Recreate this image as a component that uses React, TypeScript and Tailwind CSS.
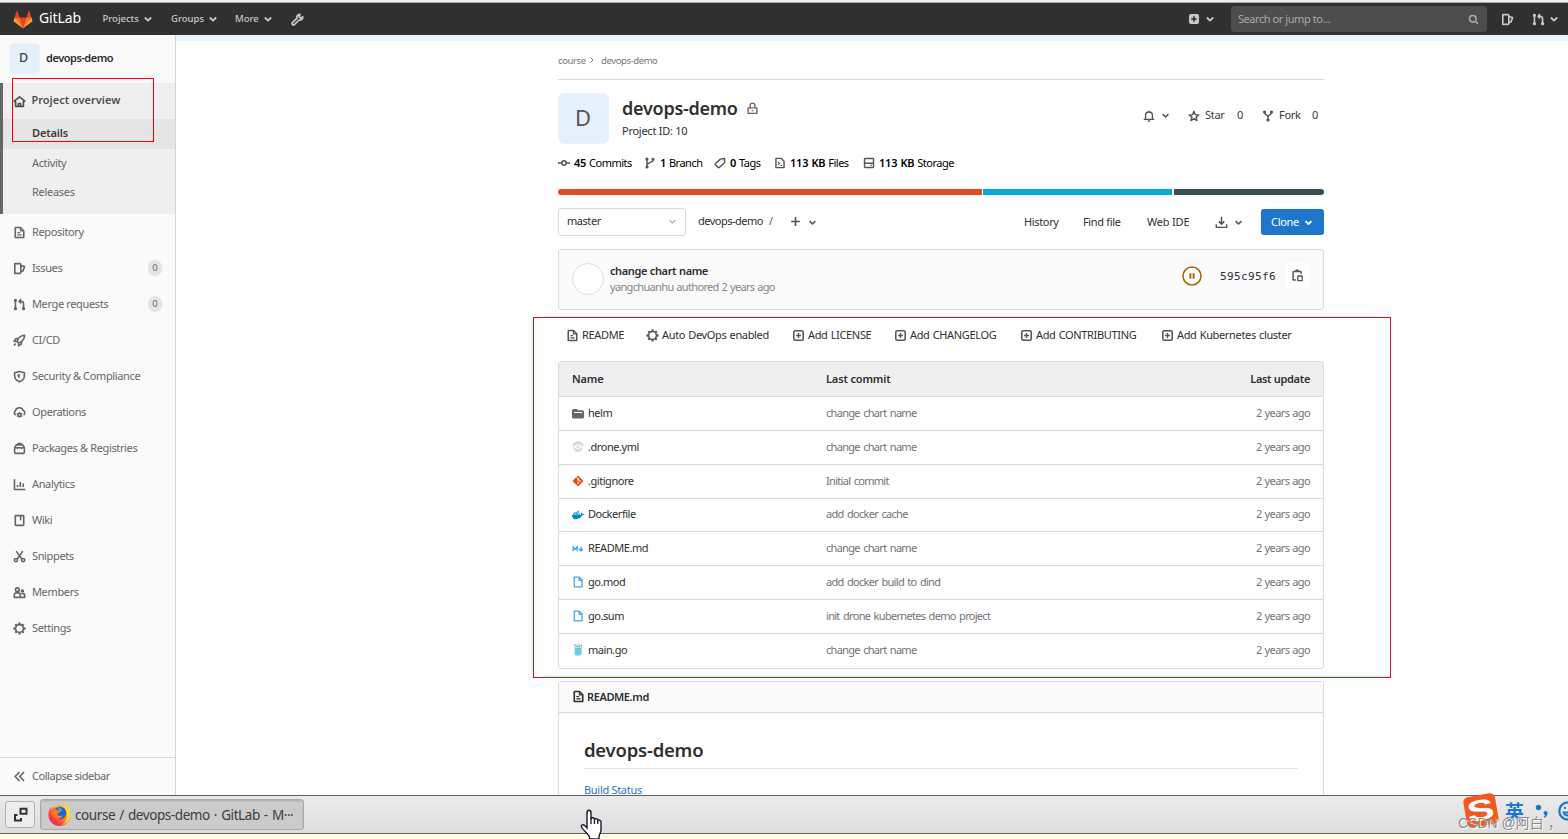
import React from 'react';
import clsx from 'clsx';
import { FaDocker, FaGitAlt } from 'react-icons/fa';

// 16x16 line icons, drawn with currentColor
const ICONS: { [key: string]: React.ReactNode } = {
  home: <path d="M.8 8.200 8 2.200l7.200 6M3.200 7.500V14h9.600V7.500M6.600 14v-3.600h2.800V14" />,
  doc: (
    <>
      <path d="M3.600 1.800h5.600L13.200 5.800v8.400H2.800V2.600a.8.800 0 0 1 .8-.8z" />
      <path d="M9 2.400V6h3.600M5.400 8.200h3.400M5.400 11h5.200" strokeWidth="1.400" />
    </>
  ),
  issues: <path d="M2.200 2h6.200a1.200 1.200 0 0 1 1.200 1.200v9.600A1.200 1.200 0 0 1 8.400 14H2.200zM9.800 4.400l4.400 1.300-1.800 5-2.600 1.500" />,
  merge: (
    <>
      <path d="M3 3v10M7.600 4h2.200c2 0 3.200 1.200 3.200 3.200V13M10 1.400 7.400 4 10 6.600" />
      <circle cx="3" cy="2.800" r="1" />
      <circle cx="3" cy="13.200" r="1" />
      <circle cx="13" cy="13.200" r="1" />
    </>
  ),
  rocket: <path d="M5 9.200C6.400 4.800 9.600 2 14.400 1.600 14 6.400 11.200 9.600 6.800 11zM5 9.200 1.400 8.800 3.800 5.600h3M6.800 11l.2 3.600 3.400-2.400V9.400M3.200 11.600l-2 2.600" />,
  shield: (
    <>
      <path d="M8 1.800 2 3.400v4c0 3.400 2.600 5.800 6 7.200 3.400-1.400 6-3.800 6-7.200v-4z" />
      <path d="M8.200 4.600v6C6.400 9.400 5.400 8.200 5.400 6.800V5.400z" fill="currentColor" stroke="none" />
    </>
  ),
  cloud: (
    <>
      <path d="M3.400 11A3 3 0 0 1 3 5.800 5 5 0 0 1 12.600 5.600 3 3 0 0 1 13 11" />
      <circle cx="8" cy="11" r="1.900" />
      <path d="M8 7.600v1.600M8 12.800v1.800M4.600 9.200l1.400.8M10 12l1.400.8M11.400 9.200 10 10M6 12l-1.400.8" strokeWidth="1.600" />
    </>
  ),
  package: (
    <>
      <path d="M2 7h12v5.600A1.400 1.400 0 0 1 12.600 14H3.400A1.400 1.400 0 0 1 2 12.600zM2 7l2-3.400h8L14 7" />
      <path d="M5.800 3.200V1.800h4.400v1.400M5.600 7v1.800M10.400 7v1.800" strokeWidth="1.500" />
    </>
  ),
  chart: <path d="M1.800 1.400v12.800h13.400M5.600 11.200V8.600M9 11.200V4.800M12.600 11.200V6.800" />,
  book: <path d="M3.600 2h8.800a.8.800 0 0 1 .8.800v10.400a.8.800 0 0 1-.8.800H3.600a.8.800 0 0 1-.8-.8V2.800a.8.800 0 0 1 .8-.8zM9.400 2v5.600" />,
  scissors: (
    <>
      <path d="m4 1.400 6.800 9.600M12 1.400 5.200 11" />
      <circle cx="3.600" cy="12.400" r="2" />
      <circle cx="12.400" cy="12.400" r="2" />
    </>
  ),
  members: (
    <>
      <circle cx="5.400" cy="4.600" r="2.300" />
      <path d="M1.600 14v-3a2.600 2.600 0 0 1 2.600-2.600h2.200A2.600 2.600 0 0 1 9 11v3zM9 14h5.400v-2.600A2 2 0 0 0 12.400 9.400H10.400" />
      <circle cx="11.600" cy="6.200" r="1.200" />
    </>
  ),
  gear: (
    <>
      <circle cx="8" cy="8" r="4.800" />
      <path d="M8 .6v2M8 13.400v2M.6 8h2M13.400 8h2M2.800 2.800l1.400 1.400M11.800 11.800l1.400 1.400M2.800 13.200l1.400-1.400M11.800 4.200l1.400-1.400" strokeWidth="2.800" />
    </>
  ),
  collapse: <path d="M8 2.600 2.600 8 8 13.400M13.600 2.600 8.200 8l5.400 5.400" />,
  lock: <path d="M2.600 7.200h10.800V14H2.600zM5 7V4.400a3 3 0 0 1 6 0V7M7 10.600h2" />,
  bell: <path d="M3.400 12V7.200a4.600 4.600 0 0 1 9.200 0V12M1 12.400h14M6.600 14.600h2.800M8 1v1.600" />,
  star: <path d="m8 1.800 1.800 4.400 4.600.3-3.600 3 1.200 4.700L8 11.600l-4 2.600 1.200-4.700-3.600-3 4.600-.3z" />,
  fork: (
    <>
      <path d="M3.400 3.600c0 3 4.600 2.600 4.600 5.400v4M12.600 3.600C12.600 6.600 8 6.200 8 9" />
      <circle cx="3.400" cy="2.800" r="1.200" />
      <circle cx="12.600" cy="2.800" r="1.200" />
      <circle cx="8" cy="13.200" r="1.200" />
    </>
  ),
  commit: (
    <>
      <circle cx="8" cy="8" r="3" />
      <path d="M0 8h5M11 8h5" />
    </>
  ),
  branch: (
    <>
      <path d="M4 3v10M12 4c0 4-8 3-8 7" />
      <circle cx="4" cy="2.800" r="1.100" />
      <circle cx="4" cy="13.200" r="1.100" />
      <circle cx="12" cy="3" r="1.100" />
    </>
  ),
  tag: <path d="M8.600 2.800 14 2l.2 5.200-6.800 6.600a1.600 1.600 0 0 1-2.200 0L2 10.800a1.600 1.600 0 0 1 0-2.200zM11 5h.4" />,
  snippet: (
    <>
      <path d="M2.600 1.800h6.800l4 3.800v8.600H2.600z" />
      <path d="m5.200 6.400 2.200 2-2.200 2M8.600 11.400h2.200" strokeWidth="1.500" />
    </>
  ),
  disk: <path d="M3 2h10a1 1 0 0 1 1 1v10a1 1 0 0 1-1 1H3a1 1 0 0 1-1-1V3a1 1 0 0 1 1-1zM2 8.400h12M10 11.200h1.800" />,
  plus: <path d="M8 1.600v12.800M1.600 8h12.800" />,
  plusBox: (
    <>
      <rect x="2.200" y="2.200" width="11.600" height="11.600" rx="1.800" />
      <path d="M8 5v6M5 8h6" strokeWidth="1.700" />
    </>
  ),
  download: <path d="M8 1v8.600M4.600 6.600 8 10l3.400-3.400M1.600 10v4h12.800v-4" />,
  copy: (
    <>
      <path d="M6 13.600H3.400a.8.800 0 0 1-.8-.8V4a.8.800 0 0 1 .8-.8h8.200a.8.800 0 0 1 .8.800v2" />
      <path d="M5.400 3.400 6.400 1.400h2.200l1 2" />
      <path d="M8.400 8.600h5.400v5.600H8.400z" strokeWidth="1.600" />
    </>
  ),
  search: (
    <>
      <circle cx="7" cy="7" r="4.800" />
      <path d="m10.600 10.600 3.800 3.800" />
    </>
  ),
  chevron: <path d="m3.800 6 4.200 4.200L12.200 6" />,
  chevronRight: <path d="m5 3 5 5-5 5" />,
  file: <path d="M3 1.600h6.600l3.800 3.800v9H3zM9.400 1.800v4h3.800" />,
};

const Icon: React.FC<{ name: string; className?: string; weight?: number }> = ({ name, className, weight = 2 }) => (
  <svg viewBox="0 0 16 16" fill="none" stroke="currentColor" strokeWidth={weight} strokeLinejoin="round" className={clsx('shrink-0', className)}>
    {ICONS[name]}
  </svg>
);

const Tanuki = () => (
  <svg viewBox="0 0 36 36" className="h-[19px] w-[20px] shrink-0">
    <path fill="#e24329" d="m2 14 9.380 9v-9l-4-12.280c-.205-.632-1.176-.632-1.380 0zM34 14l-9.380 9v-9l4-12.280c.205-.632 1.176-.632 1.380 0zM18 34.380 3 14h30z" />
    <path fill="#fc6d26" d="M18 34.380 11.380 14H2l4 11zM18 34.380 24.620 14H34l-4 11z" />
    <path fill="#fca326" d="M2 14 .1 20.160c-.18.565 0 1.200.5 1.560L18 34.380zM34 14l1.900 6.160c.18.565 0 1.200-.5 1.560L18 34.380z" />
  </svg>
);

const Wrench = () => (
  <svg viewBox="0 0 16 16" className="h-[13px] w-[13px] shrink-0">
    <path fill="none" stroke="#c8c8c8" strokeWidth="2.100" strokeLinejoin="round" d="M14.400 4.800 11.600 6.200 9.800 4.400 11 1.600C8.200 1.400 6.600 4 7.400 6.400L1.800 11.800a1.600 1.600 0 0 0 2.400 2.400l5.600-5.600c2.800.6 5-1.400 4.600-3.800z" />
  </svg>
);

const NAV = [
  { icon: 'doc', label: 'Repository' },
  { icon: 'issues', label: 'Issues', count: 0 },
  { icon: 'merge', label: 'Merge requests', count: 0 },
  { icon: 'rocket', label: 'CI/CD' },
  { icon: 'shield', label: 'Security & Compliance' },
  { icon: 'cloud', label: 'Operations' },
  { icon: 'package', label: 'Packages & Registries' },
  { icon: 'chart', label: 'Analytics' },
  { icon: 'book', label: 'Wiki' },
  { icon: 'scissors', label: 'Snippets' },
  { icon: 'members', label: 'Members' },
  { icon: 'gear', label: 'Settings' },
];

const Sidebar = () => (
  <aside className="flex w-[176px] shrink-0 flex-col border-r border-[#d4d4d4] bg-[#fafafa] text-[#666]">
    <div className="flex h-12 items-center pb-px pl-[9px]">
      <div className="flex h-[31px] w-[31px] items-center justify-center rounded border border-[#eef3f8] bg-[#e4f1fd] pr-[2px] text-[12.500px] font-medium text-[#444]">D</div>
      <span className="ml-[6px] font-semibold tracking-[-0.48px] text-[#2e2e2e]">devops-demo</span>
    </div>
    <div className="h-[131px] border-l-3 border-[#666] bg-[#efefef]">
      <div className="flex h-9 items-center pb-[2px] pl-[10px] font-semibold text-[#4f4f4f]">
        <Icon name="home" className="mt-[2px] h-[13px] w-[13px]" />
        <span className="ml-[5.500px] tracking-[0px]">Project overview</span>
      </div>
      <div className="flex h-[30px] items-center bg-[#e5e5e5] pb-[2px] pl-[29px] font-semibold tracking-[-0.15px] text-[#3a3a3a]">Details</div>
      <div className="flex h-[29px] items-center pl-[29px] tracking-[-0.35px]">Activity</div>
      <div className="flex h-[29px] items-center pl-[29px] tracking-[-0.3px]">Releases</div>
    </div>
    {NAV.map(item => (
      <div key={item.label} className="flex h-9 items-center pr-[13px] pl-[13px]">
        <Icon name={item.icon} className="h-[13px] w-[13px]" />
        <span className="ml-[6px] tracking-[-0.36px]">{item.label}</span>
        {item.count !== undefined && (
          <span className="ml-auto flex h-4 w-[14px] items-center justify-center rounded-full bg-[#e4e4e4] text-[9.500px]">{item.count}</span>
        )}
      </div>
    ))}
    <div className="mt-auto flex h-[38px] items-center border-t border-[#d8d8d8] pl-[13px]">
      <Icon name="collapse" className="h-[13px] w-[13px]" />
      <span className="ml-[6px] tracking-[-0.45px]">Collapse sidebar</span>
    </div>
  </aside>
);

const Header = () => (
  <header className="flex h-8 shrink-0 items-center bg-[#303030] pl-[13px] text-[#c8c8c8]">
    <Tanuki />
    <span className="mb-[3px] ml-[6px] w-[63.500px] text-[14px] tracking-[-0.1px] text-white">GitLab</span>
    {[['Projects', 'w-[68.500px]'], ['Groups', 'w-[64px]'], ['More', 'w-[56px]']].map(([label, width]) => (
      <div key={label} className={clsx('flex items-center text-[9.500px] font-medium', width)}>
        <span>{label}</span>
        <Icon name="chevron" className="ml-[3px] h-3 w-3" weight={2.400} />
      </div>
    ))}
    <Wrench />
    <div className="ml-auto flex items-center">
      <svg viewBox="0 0 10 10" className="h-[10px] w-[10px]">
        <rect width="10" height="10" rx="2" fill="#c8c8c8" />
        <path d="M5 2.200v5.600M2.200 5h5.600" stroke="#303030" strokeWidth="1.600" />
      </svg>
      <Icon name="chevron" className="ml-[5px] h-3 w-3" weight={2.400} />
      <div className="ml-[15px] flex h-[26px] w-[256px] items-center justify-between rounded bg-[#4d4d4d] pr-2 pl-[7px] text-[#a8a8a8]">
        <span className="tracking-[-0.44px]">Search or jump to...</span>
        <Icon name="search" className="h-[11px] w-[11px]" weight={2.300} />
      </div>
      <Icon name="issues" className="ml-[14px] h-[13px] w-[13px]" />
      <Icon name="merge" className="ml-[18px] h-[13px] w-[13px]" />
      <Icon name="chevron" className="mr-[8px] ml-[3px] h-3 w-3" weight={2.400} />
    </div>
  </header>
);

const STATS = [
  { icon: 'commit', value: '45', label: 'Commits', width: 'w-[86px]' },
  { icon: 'branch', value: '1', label: 'Branch', width: 'w-[70px]' },
  { icon: 'tag', value: '0', label: 'Tags', width: 'w-[60px]' },
  { icon: 'snippet', value: '113 KB', label: 'Files', width: 'w-[89px]' },
  { icon: 'disk', value: '113 KB', label: 'Storage', width: 'w-[100px]' },
];

const SETUP = [
  { icon: 'doc', label: 'README', width: 'w-[80px]' },
  { icon: 'gear', label: 'Auto DevOps enabled', width: 'w-[146px]' },
  { icon: 'plusBox', label: 'Add LICENSE', width: 'w-[102px]' },
  { icon: 'plusBox', label: 'Add CHANGELOG', width: 'w-[126px]' },
  { icon: 'plusBox', label: 'Add CONTRIBUTING', width: 'w-[141px]' },
  { icon: 'plusBox', label: 'Add Kubernetes cluster', width: 'w-[140px]' },
];

const FolderIcon = () => (
  <svg viewBox="0 0 12 12" className="h-3 w-3">
    <path fill="#666" d="M1.500 1h3.200L6 2.300h4.500A1.500 1.500 0 0 1 12 3.800V9a1.500 1.500 0 0 1-1.500 1.500h-9A1.500 1.500 0 0 1 0 9V2.500A1.500 1.500 0 0 1 1.500 1z" />
    <path d="M2 4.500h8.200" stroke="#fff" strokeWidth="1" />
  </svg>
);

const DroneIcon = () => (
  <svg viewBox="0 0 12 12" className="mb-px h-3 w-3">
    <path d="M.4 5a5.600 4.800 0 0 1 11.200 0H9a3.500 3 0 0 0-6 0zM1.200 6.200h1.600a3.400 3.200 0 0 0 6.400 0h1.600A5 5 0 0 1 6 10.800a5 5 0 0 1-4.800-4.600z" fill="#dadada" />
    <circle cx="6" cy="5.800" r="1.600" fill="#dadada" />
  </svg>
);

const MarkdownIcon = () => (
  <svg viewBox="0 0 12 12" className="h-3 w-3">
    <path d="M1.200 8.300V4l2 2.400L5.200 4v4.300M9 3.800v3.600M7.200 6 9 8l1.800-2" fill="none" stroke="#42a5f5" strokeWidth="1.400" />
  </svg>
);

const GopherIcon = () => (
  <svg viewBox="0 0 12 12" className="mb-px h-3 w-3">
    <rect x="2.600" y=".6" width="7" height="11" rx="2.600" fill="#6ad0dc" />
    <circle cx="3" cy="1.300" r=".9" fill="#62aab3" />
    <circle cx="9.300" cy="1.300" r=".9" fill="#62aab3" />
    <circle cx="4.600" cy="2.500" r="1.300" fill="#fff" />
    <circle cx="7.600" cy="2.500" r="1.300" fill="#fff" />
    <circle cx="4.900" cy="2.500" r=".5" fill="#222" />
    <circle cx="7.300" cy="2.500" r=".5" fill="#222" />
    <path d="M5.400 4h1.500v1H5.400z" fill="#b69b7d" />
  </svg>
);

const FileIcon = () => <Icon name="file" className="mb-px h-3 w-3 text-[#42a5f5]" weight={1.700} />;

const FILES = [
  { icon: <FolderIcon />, name: 'helm', commit: 'change chart name', height: 'h-[34px]' },
  { icon: <DroneIcon />, name: '.drone.yml', commit: 'change chart name', height: 'h-[34px]' },
  { icon: <FaGitAlt className="mb-[2px] h-3 w-3 text-[#e64a19]" />, name: '.gitignore', commit: 'Initial commit', height: 'h-[34px]' },
  { icon: <FaDocker className="h-3 w-3 text-[#0288d1]" />, name: 'Dockerfile', commit: 'add docker cache', height: 'h-[33px] pb-px' },
  { icon: <MarkdownIcon />, name: 'README.md', commit: 'change chart name', height: 'h-[34px]' },
  { icon: <FileIcon />, name: 'go.mod', commit: 'add docker build to dind', height: 'h-[34px]' },
  { icon: <FileIcon />, name: 'go.sum', commit: 'init drone kubernetes demo project', height: 'h-[34px]' },
  { icon: <GopherIcon />, name: 'main.go', commit: 'change chart name', height: 'h-[34px] pb-px' },
];

const ProjectHeader = () => (
  <>
    <nav className="flex h-[39px] items-center border-b border-[#dbdbdb] pt-[2px] text-[9.500px] tracking-[-0.4px] text-[#777]">
      <span className="w-[30px]">course</span>
      <Icon name="chevronRight" className="mb-[3px] h-[8px] w-[8px]" weight={1.900} />
      <span className="ml-[5px]">devops-demo</span>
    </nav>
    <div className="mt-[13px] flex h-[51px]">
      <div className="flex w-[51px] items-center justify-center rounded-md border border-[#eef3f8] bg-[#e4f1fd] pr-px pb-[2px] text-[22px] text-[#555]">D</div>
      <div className="ml-[13px]">
        <div className="mt-[3px] flex h-6 items-center">
          <h1 className="w-[124px] text-[18px] font-semibold tracking-[-0.25px] text-[#303030]">devops-demo</h1>
          <Icon name="lock" className="h-[13px] w-[13px] text-[#666]" weight={1.700} />
        </div>
        <div className="mt-[1px] h-5 leading-5 tracking-[-0.26px]">Project ID: 10</div>
      </div>
      <div className="ml-auto flex h-[45px] items-center text-[#3a3a3a]">
        <Icon name="bell" className="h-3 w-3 text-[#555]" weight={1.800} />
        <Icon name="chevron" className="ml-[5px] h-[11px] w-[11px] text-[#555]" weight={2.300} />
        <Icon name="star" className="ml-[17px] h-3 w-3 text-[#555]" weight={1.900} />
        <span className="ml-[5px] w-[32px] tracking-[-0.3px]">Star</span>
        <span className="w-[25px]">0</span>
        <Icon name="fork" className="h-3 w-3 text-[#555]" />
        <span className="ml-[5px] w-[33px] tracking-[-0.3px]">Fork</span>
        <span className="w-[12px]">0</span>
      </div>
    </div>
    <div className="mt-[9px] flex h-5 items-center whitespace-nowrap text-black">
      {STATS.map(s => (
        <div key={s.label} className={clsx('flex items-center tracking-[-0.5px] [word-spacing:0.5px]', s.width)}>
          <Icon name={s.icon} className="mr-[4px] h-3 w-3 text-[#555]" weight={1.900} />
          <span><strong className="font-semibold tracking-[-0.2px]">{s.value}</strong> {s.label}</span>
        </div>
      ))}
    </div>
    <div className="mt-4 flex h-[6px] overflow-hidden rounded-full">
      <div className="mr-[1px] w-[424px] bg-[#e44b23]" />
      <div className="mr-[2px] w-[189px] bg-[#00add8]" />
      <div className="flex-1 bg-[#384d54]" />
    </div>
  </>
);

const TreeControls = () => (
  <div className="mt-[13px] flex h-7 items-center whitespace-nowrap text-[#303030]">
    <div className="flex h-7 w-[128px] items-center justify-between rounded-[3px] border border-[#dbdbdb] pr-[7px] pb-px pl-2 tracking-[-0.45px]">
      master
      <Icon name="chevron" className="h-[11px] w-[11px] text-[#b0b0b0]" weight={1.900} />
    </div>
    <span className="mb-px ml-3 w-[71px] tracking-[-0.5px]">devops-demo</span>
    <span className="mb-px w-[21px] text-[#555]">/</span>
    <Icon name="plus" className="mb-px h-[11px] w-[11px] text-[#555]" weight={2.400} />
    <Icon name="chevron" className="ml-[6px] h-[11px] w-[11px] text-[#555]" weight={2.300} />
    <div className="ml-auto flex items-center tracking-[-0.3px]">
      <span className="w-[59px] tracking-[-0.35px]">History</span>
      <span className="w-[64px] tracking-[-0.35px]">Find file</span>
      <span className="w-[68px] tracking-[-0.2px]">Web IDE</span>
      <Icon name="download" className="h-[13px] w-[13px] text-[#555]" weight={1.800} />
      <Icon name="chevron" className="mr-[17px] ml-[5px] h-[11px] w-[11px] text-[#555]" weight={2.300} />
      <button className="flex h-[26px] w-[63px] items-center rounded-[3px] bg-[#1f75cb] pl-[10px] text-white">
        Clone
        <Icon name="chevron" className="ml-[4px] h-[11px] w-[11px]" weight={2.600} />
      </button>
    </div>
  </div>
);

const LastCommit = () => (
  <div className="mt-[13px] flex h-[61px] items-center rounded-[3px] border border-[#dbdbdb] bg-[#fafafa] pl-[13px]">
    <div className="mb-px h-8 w-8 rounded-full border border-[#e0e0e0] bg-[#fdfdfd]" />
    <div className="mb-[2px] ml-[6px] leading-4">
      <div className="font-semibold tracking-[-0.4px] [word-spacing:0.5px] text-[#2e2e2e]">change chart name</div>
      <div className="tracking-[-0.66px] [word-spacing:0.6px] text-[#868686]">yangchuanhu authored 2 years ago</div>
    </div>
    <div className="mr-[13px] mb-2 ml-auto flex items-center">
      <svg viewBox="0 0 20 20" className="mr-px h-5 w-5">
        <circle cx="10" cy="10" r="9" fill="#fff" stroke="#ab6100" strokeWidth="1.500" />
        <path d="M8.400 7.200v5.600M11.600 7.200v5.600" stroke="#ab6100" strokeWidth="1.900" />
      </svg>
      <span className="mt-[3px] ml-[17px] w-[65px] font-['DejaVu_Sans_Mono','Liberation_Mono',monospace] text-[11px] tracking-[0.38px] text-[#303030]">595c95f6</span>
      <div className="flex h-[25px] w-[25px] items-center justify-center rounded-[3px] bg-white">
        <Icon name="copy" className="h-[13px] w-[13px] text-[#555]" weight={1.800} />
      </div>
    </div>
  </div>
);

const FileTable = () => (
  <div className="mt-3 rounded-[3px] border border-[#dbdbdb]">
    <div className="flex h-[35px] items-center border-b border-[#dbdbdb] bg-[#efefef] px-[13px] font-semibold tracking-[-0.15px] text-[#303030]">
      <span className="w-[254px]">Name</span>
      <span>Last commit</span>
      <span className="ml-auto tracking-[-0.32px]">Last update</span>
    </div>
    {FILES.map(f => (
      <div key={f.name} className={clsx('flex items-center border-b border-[#dbdbdb] px-[13px] last:border-b-0', f.height)}>
        <div className="w-4">{f.icon}</div>
        <span className="w-[238px] tracking-[-0.45px] text-[#303030]">{f.name}</span>
        <span className="tracking-[-0.7px] [word-spacing:1.200px] text-[#737373]">{f.commit}</span>
        <span className="ml-auto tracking-[-0.6px] [word-spacing:0.6px] text-[#737373]">2 years ago</span>
      </div>
    ))}
  </div>
);

const Readme = () => (
  <div className="mt-[12px] h-[160px] rounded-t-[3px] border border-[#dbdbdb]">
    <div className="flex h-[31px] items-center border-b border-[#dbdbdb] bg-[#fafafa] pl-[13px] font-semibold tracking-[-0.4px] text-[#303030]">
      <Icon name="doc" className="mr-[2px] mb-px h-[13px] w-[13px]" />
      README.md
    </div>
    <div className="mx-[25px]">
      <h2 className="flex h-[56px] items-end border-b border-[#e5e5e5] pb-[4px] text-[18.500px] font-semibold tracking-[-0.22px] text-[#303030]">devops-demo</h2>
      <a className="mt-[13px] block leading-4 tracking-[-0.3px] text-[#1f75cb]">Build Status</a>
    </div>
  </div>
);

const FirefoxLogo = () => (
  <svg viewBox="0 0 24 24" className="h-[23px] w-[23px] shrink-0">
    <defs>
      <linearGradient id="fox" x1="1" y1="0" x2="0" y2="1">
        <stop offset="0" stopColor="#fff04a" />
        <stop offset=".4" stopColor="#ffa01e" />
        <stop offset=".7" stopColor="#ff3f3c" />
        <stop offset="1" stopColor="#d6117a" />
      </linearGradient>
    </defs>
    <path d="M12 1.200c2 0 3.500.6 4.400 1.300l.8-2c3 2.400 6.300 6.500 6.300 12A11.500 11.500 0 0 1 .5 12.500c0-3.500 1-6.200 2.300-8l.6 2.300L5.600 3l1 2z" fill="url(#fox)" />
    <circle cx="12.500" cy="10.500" r="6.600" fill="#1367d8" />
    <path d="M10 4.500c3 0 4.500 2 5 3.500l-3 1.500z" fill="#17b2f5" />
    <path d="M4 8c2-2 5-1.800 6.500-.3l2.500.5-.5 1.700-2.800 1.300c.8 2.600 3.800 2.800 6 1.400-1 3.400-4.500 4.700-7.700 3.200C5 14.500 3.500 11 4 8z" fill="#ff7a1c" />
    <path d="M17.500 1c3.600 3 6 7 5.600 12.300-.6 5-4.500 8.600-9 9.200 5-2 7-6.500 5.600-12C19 8 17 5.500 17.500 1z" fill="#ffd93a" />
  </svg>
);

const Taskbar = () => (
  <footer className="flex h-[39px] shrink-0 items-center overflow-hidden border-y border-[#5f5f5f] bg-linear-to-b from-[#ebebeb] to-[#dedede] pl-[5px]">
    <div className="flex h-[27px] w-[30px] items-center justify-center rounded-[3px] border border-[#b0b0b0] bg-[#ededed]">
      <svg viewBox="0 0 15 15" className="h-[15px] w-[15px]" fill="none" stroke="#2e3436" strokeWidth="2">
        <path d="M7.500 1.800h6v5h-6zM4.500 8H2v5.400h6V11" />
      </svg>
    </div>
    <div className="ml-[5px] flex h-[31px] w-[264px] items-center rounded-[3px] border border-[#aaa] bg-[#cbcbcb] pl-[7px] shadow-[inset_0_1px_2px_rgba(0,0,0,0.15)]">
      <FirefoxLogo />
      <span className="mt-px ml-[4px] text-[13.500px] tracking-[-0.42px] whitespace-nowrap [word-spacing:1px] text-[#3a3f40]">course / devops-demo · GitLab - M···</span>
    </div>
  </footer>
);

// Input method bar and page watermark, floating over the taskbar
const ImeBar = () => (
  <>
    <div className="absolute top-[795px] left-[1465px] flex h-[31px] w-[32px] rotate-[-10deg] items-center justify-center rounded-[5px] bg-[#f4581f] font-['Liberation_Sans',sans-serif] text-[29px] font-bold text-white">
      <span className="scale-x-140">S</span>
    </div>
    <div className="absolute top-[798px] left-[1505px] flex items-center text-[#1c77d0]">
      <span className="font-['Noto_Sans_CJK_SC',sans-serif] text-[19px] leading-[26px] font-bold">英</span>
      <svg viewBox="0 0 14 16" className="ml-[11px] h-4 w-[14px]" fill="currentColor">
        <circle cx="3.500" cy="4.500" r="2.700" />
        <path d="M9 8.500c2-1.400 4 0 3.500 2.200-.4 2-1.500 3.200-3 4l-.8-1c.8-.6 1.200-1 1.400-1.800-1.200-.2-2-2-1.100-3.400z" />
      </svg>
      <svg viewBox="0 0 20 20" className="ml-[9px] h-5 w-5" fill="none" stroke="currentColor" strokeWidth="2.200">
        <circle cx="10" cy="10" r="8.700" />
        <path d="M5.500 11.500c1 4 8 4 9 0zM7 6v2M13 6v2" strokeWidth="1.800" />
      </svg>
    </div>
    <div className="absolute top-[813px] left-[1458px] font-['Liberation_Sans','Noto_Sans_CJK_SC',sans-serif] text-[14px] leading-5 whitespace-nowrap text-[#8c8c8c] [text-shadow:1px_1px_0_#fff]">CSDN @阿白 ，</div>
  </>
);

const HandCursor = () => (
  <svg viewBox="0 0 24 30" className="absolute top-[809px] left-[579px] h-[30px] w-6">
    <path d="M8 19V3.500c0-3 4-3 4 0V10c.5-2 3.500-1.500 3.500.5.500-1.500 3.300-1 3.300 1 .6-1 3.200-.6 3.200 1.500v8c0 2.500-2 4.500-2 7v2H10.500v-2c0-2-6-6.500-7.800-9.500-1.200-2 1.200-3.500 2.800-2.200z" fill="#fff" stroke="#1b1b2b" strokeWidth="1.400" />
    <path d="M12 9v6M15.500 10v5M18.800 11.500V15" stroke="#1b1b2b" strokeWidth="1.300" />
  </svg>
);

export default function App() {
  return (
    <div className="relative flex h-[839px] w-[1568px] flex-col overflow-hidden bg-[#ffffe1] font-['Noto_Sans','Open_Sans',sans-serif] text-[11px] text-[#303030]">
      <div className="h-[3px] shrink-0 border-b border-[#a8a8a8] bg-[#ededed]" />
      <Header />
      <div className="flex h-[760px] shrink-0 overflow-hidden">
        <Sidebar />
        <main className="flex-1 bg-white">
          <div className="h-[6px] bg-[#e8f3fc]" />
          <div className="ml-[382px] w-[766px]">
            <ProjectHeader />
            <TreeControls />
            <LastCommit />
            <div className="mt-[13px] flex h-[26px] items-center whitespace-nowrap pb-[2px] pl-2">
              {SETUP.map(s => (
                <div key={s.label} className={clsx('flex items-center tracking-[-0.34px] [word-spacing:0.6px]', s.width)}>
                  <Icon name={s.icon} className="mr-[3px] h-[13px] w-[13px] text-[#555]" weight={1.900} />
                  {s.label}
                </div>
              ))}
            </div>
            <FileTable />
            <Readme />
          </div>
        </main>
      </div>
      <Taskbar />
      <div className="absolute top-[78px] left-[12px] h-[64px] w-[142px] border border-[#f00]" />
      <div className="absolute top-[317px] left-[533px] h-[361px] w-[858px] border border-[#e60f0f]" />
      <HandCursor />
      <ImeBar />
    </div>
  );
}
